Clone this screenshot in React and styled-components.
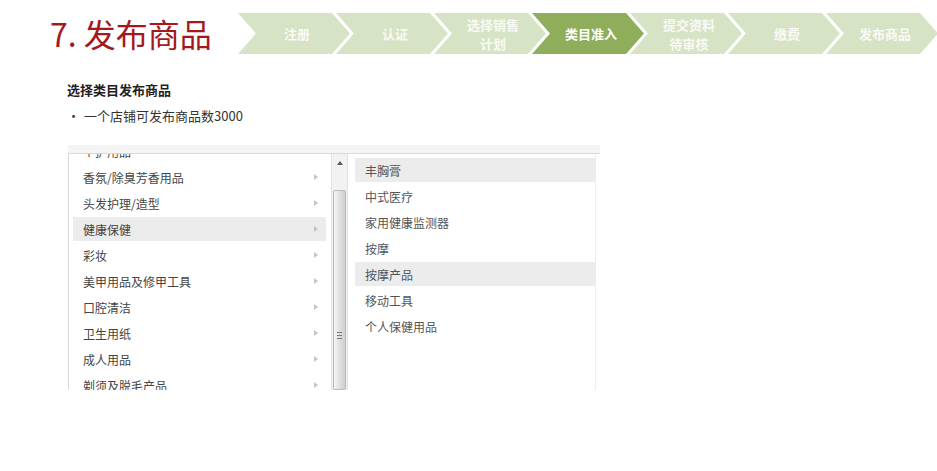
import React from "react";
import styled, { createGlobalStyle } from "styled-components";

const Global = createGlobalStyle`
  html, body { margin: 0; padding: 0; background: #fff; }
  body { font-family: "Noto Sans CJK SC", "Noto Sans", sans-serif; }
`;

const Page = styled.div`
  width: 937px;
  height: 471px;
  overflow: hidden;
  background: #fff;
`;

const Header = styled.div`
  display: flex;
  align-items: flex-start;
  padding-top: 13px;
`;

const Title = styled.h1`
  box-sizing: border-box;
  width: 238px;
  flex: none;
  margin: 0;
  padding-left: 50px;
  font-size: 32px;
  line-height: 41px;
  font-weight: 400;
  color: #a4191c;
  white-space: nowrap;
`;

const Steps = styled.div`
  display: flex;
  flex: none;
`;

const Step = styled.div`
  flex: none;
  width: 112px;
  height: 41px;
  margin-left: ${(p) => (p.$first ? 0 : -14)}px;
  background: ${(p) => (p.$active ? "#8fae5b" : "#d7e3c5")};
  clip-path: polygon(0 0, calc(100% - 18px) 0, 100% 50%, calc(100% - 18px) 100%, 0 100%, 18px 50%);
  display: flex;
  flex-direction: column;
  align-items: center;
  justify-content: center;
  padding-left: 6px;
  box-sizing: border-box;
  color: ${(p) => (p.$active ? "#ffffff" : "rgba(255,255,255,0.85)")};
  font-size: 13px;
  font-weight: 700;
  line-height: 19px;
  text-align: center;
`;

const Section = styled.div`
  padding-left: 67px;
  margin-top: 26px;
  color: #1e1e1e;
`;

const Heading = styled.div`
  font-size: 13px;
  font-weight: 700;
  line-height: 20px;
`;

const Bullet = styled.div`
  display: flex;
  margin-top: 6px;
  font-size: 13px;
  line-height: 20px;
  color: #333;
`;

const Dot = styled.span`
  width: 17px;
  flex: none;
`;

const Panel = styled.div`
  margin: 19px 0 0 68px;
  width: 532px;
  height: 245px;
  overflow: hidden;
`;

const TopBand = styled.div`
  height: 8px;
  background: #f4f4f4;
  border-bottom: 1px solid #d9d9d9;
`;

const Body = styled.div`
  display: flex;
  height: 236px;
`;

const LeftList = styled.div`
  box-sizing: border-box;
  width: 263px;
  flex: none;
  border-left: 1px solid #d6d6d6;
  overflow: hidden;
  padding: 0 5px 0 4px;
`;

const Items = styled.div`
  display: flex;
  flex-direction: column;
  gap: 2px;
  margin-top: ${(p) => p.$offset || 0}px;
`;

const Item = styled.div`
  display: flex;
  align-items: center;
  justify-content: space-between;
  height: 24px;
  padding: 0 8px 0 10px;
  font-size: 12px;
  color: #444;
  background: ${(p) => (p.$selected ? "#ececec" : "transparent")};
  white-space: nowrap;
`;

const Caret = styled.span`
  width: 0;
  height: 0;
  border-top: 3px solid transparent;
  border-bottom: 3px solid transparent;
  border-left: 4px solid #c4c4c4;
`;

const Scrollbar = styled.div`
  box-sizing: border-box;
  width: 17px;
  flex: none;
  background: #f2f2f2;
  border-left: 1px solid #e2e2e2;
  border-right: 1px solid #e2e2e2;
  display: flex;
  flex-direction: column;
  align-items: center;
`;

const UpArrow = styled.span`
  margin-top: 7px;
  width: 0;
  height: 0;
  border-left: 3px solid transparent;
  border-right: 3px solid transparent;
  border-bottom: 4px solid #555;
`;

const Thumb = styled.div`
  box-sizing: border-box;
  margin-top: 25px;
  width: 13px;
  flex: 1;
  border: 1px solid #b9b9b9;
  border-radius: 2px;
  background: linear-gradient(to right, #f4f4f4, #dcdcdc 60%, #cfcfcf);
  display: flex;
  flex-direction: column;
  align-items: center;
`;

const Grip = styled.span`
  margin-top: 141px;
  width: 5px;
  height: 5px;
  border-top: 1px solid #777;
  border-bottom: 1px solid #777;
  &::after {
    content: "";
    display: block;
    margin-top: 2px;
    height: 1px;
    background: #777;
  }
`;

const RightList = styled.div`
  box-sizing: border-box;
  width: 248px;
  flex: none;
  padding: 4px 0 0 7px;
  border-right: 1px solid #eeeeee;
`;

const RightItem = styled(Item)`
  color: #555;
`;

const steps = [
  ["注册"],
  ["认证"],
  ["选择销售", "计划"],
  ["类目准入"],
  ["提交资料", "待审核"],
  ["缴费"],
  ["发布商品"],
];

const left = [
  "个护用品",
  "香氛/除臭芳香用品",
  "头发护理/造型",
  "健康保健",
  "彩妆",
  "美甲用品及修甲工具",
  "口腔清洁",
  "卫生用纸",
  "成人用品",
  "剃须及脱毛产品",
];

const right = ["丰胸膏", "中式医疗", "家用健康监测器", "按摩", "按摩产品", "移动工具", "个人保健用品"];

export default function App() {
  return (
    <Page>
      <Global />
      <Header>
        <Title>7. 发布商品</Title>
        <Steps>
          {steps.map((s, i) => (
            <Step key={i} $first={i === 0} $active={i === 3}>
              {s.map((l) => (
                <span key={l}>{l}</span>
              ))}
            </Step>
          ))}
        </Steps>
      </Header>
      <Section>
        <Heading>选择类目发布商品</Heading>
        <Bullet>
          <Dot>•</Dot>
          <span>一个店铺可发布商品数3000</span>
        </Bullet>
      </Section>
      <Panel>
        <TopBand />
        <Body>
          <LeftList>
            <Items $offset={-15}>
              {left.map((t) => (
                <Item key={t} $selected={t === "健康保健"}>
                  <span>{t}</span>
                  <Caret />
                </Item>
              ))}
            </Items>
          </LeftList>
          <Scrollbar>
            <UpArrow />
            <Thumb>
              <Grip />
            </Thumb>
          </Scrollbar>
          <RightList>
            <Items>
              {right.map((t) => (
                <RightItem key={t} $selected={t === "丰胸膏" || t === "按摩产品"}>
                  {t}
                </RightItem>
              ))}
            </Items>
          </RightList>
        </Body>
      </Panel>
    </Page>
  );
}
